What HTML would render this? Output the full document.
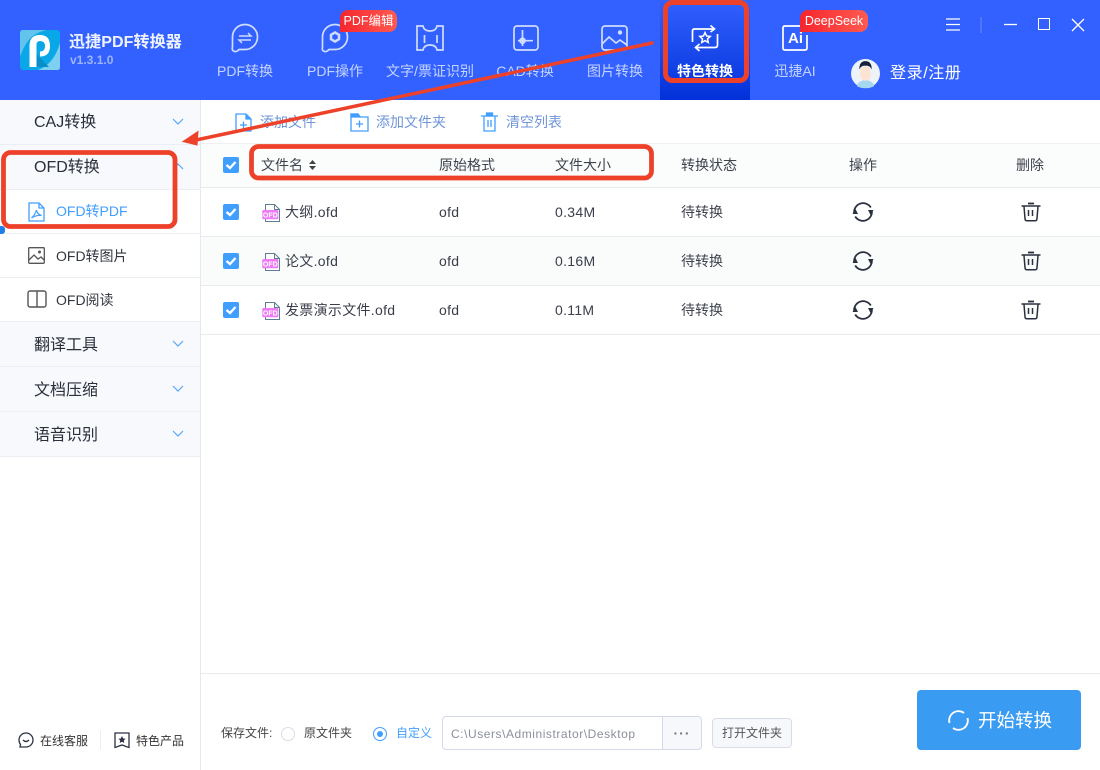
<!DOCTYPE html>
<html><head><meta charset="utf-8">
<style>
*{box-sizing:border-box}
html,body{margin:0;padding:0;width:1100px;height:770px;overflow:hidden;background:#fff;font-family:"Liberation Sans","Noto Sans CJK SC",sans-serif;color:#333}
.a{position:absolute;white-space:nowrap}
svg{position:absolute;overflow:visible}
.nav{color:#c4d4ff;font-size:14px;line-height:20px;top:61px;text-align:center;transform:translateX(-50%)}
.side{left:34px;font-size:16px;line-height:24px;color:#2b2f3a}
.sub{left:56px;font-size:14px;line-height:20px;color:#33363f}
.row{left:201px;width:899px;border-bottom:1px solid #e9ebf0}
.t{font-size:14px;line-height:20px;color:#3a3e4a;letter-spacing:.3px}
.h{font-size:14px;line-height:20px;color:#3f434e;top:155px}
.cb{position:absolute;left:223px;width:16px;height:16px;background:#409eff;border-radius:2px}
.sec{left:0;width:200px;background:#f7f9fd;border-bottom:1px solid #eceef3}
.subrow{left:0;width:200px;height:44px;background:#fff;border-bottom:1px solid #eceef3}
.tb{font-size:14px;line-height:20px;color:#6f95d8;top:112px}
</style></head><body>

<!-- header -->
<div class="a" style="left:0;top:0;width:1100px;height:100px;background:#3361ff"></div>
<div class="a" style="left:660px;top:0;width:90px;height:100px;background:linear-gradient(#3361ff,#0231d9)"></div>

<!-- logo -->
<svg style="left:20px;top:30px" width="40" height="40" viewBox="0 0 40 40">
<rect width="40" height="40" rx="3" fill="#0aa7e8"/>
<path d="M0 3Q0 0 3 0H27Q9 3 2 22L0 26Z" fill="#62c3ec"/>
<path d="M40 13V37Q40 40 37 40H18Q34 34 40 13Z" fill="#7dd0f2"/>
<path d="M16.500 24L29 37H16.500Z" fill="#0a8ec8"/>
<path d="M9.500 37V15Q10 5 20 5Q30 5 30 16Q30 26.500 20 26.500V21.500Q25 21.500 25 16Q25 11 20 11Q16.500 11 16.500 15V37Z" fill="#fff"/>
</svg>
<div class="a" style="left:69px;top:32px;font-size:16px;line-height:22px;color:#eef3ff;font-weight:bold;letter-spacing:.1px">迅捷PDF转换器</div>
<div class="a" style="left:70px;top:52px;font-size:12px;line-height:16px;color:#9db5f7;font-weight:bold">v1.3.1.0</div>

<!-- nav icons -->
<svg style="left:231px;top:24px" width="28" height="28" viewBox="0 0 28 28" fill="none" stroke="#cfdcff" stroke-width="1.700">
<path d="M1.500 13A12.500 12.500 0 1 1 14 25.500H8Q6 28 3.500 27.500Q.5 26.500 1.500 23Z"/>
<path d="M8 12H20L17 9M20 16H8L11 19" stroke-width="1.500"/></svg>
<div class="a nav" style="left:245px">PDF转换</div>

<svg style="left:321px;top:24px" width="28" height="28" viewBox="0 0 28 28" fill="none" stroke="#cfdcff" stroke-width="1.700">
<path d="M1.500 13A12.500 12.500 0 1 1 14 25.500H8Q6 28 3.500 27.500Q.5 26.500 1.500 23Z"/>
<path d="M14 8.500L18 10.800V15.200L14 17.500L10 15.200V10.800Z" stroke-width="2.500"/></svg>
<div class="a nav" style="left:335px">PDF操作</div>

<svg style="left:416px;top:25px" width="28" height="26" viewBox="0 0 28 26" fill="none" stroke="#cfdcff" stroke-width="1.700">
<path d="M1 1H7Q8 6 14 6Q20 6 21 1H27V25H21Q20 20 14 20Q8 20 7 25H1Z"/>
<path d="M8.500 10V18M21 10V18"/></svg>
<div class="a nav" style="left:430px">文字/票证识别</div>

<svg style="left:513px;top:25px" width="26" height="26" viewBox="0 0 26 26" fill="none" stroke="#cfdcff" stroke-width="1.700">
<rect x="1" y="1" width="24" height="24" rx="3"/>
<path d="M9.500 5V21M5 15.700H20"/><circle cx="9.500" cy="15.700" r="2.500" fill="#cfdcff"/></svg>
<div class="a nav" style="left:525px">CAD转换</div>

<svg style="left:601px;top:25px" width="28" height="26" viewBox="0 0 28 26" fill="none" stroke="#cfdcff" stroke-width="1.700">
<rect x="1" y="1" width="25" height="24" rx="3"/>
<path d="M1 19L8 12L15 18L19 15L26 20"/><circle cx="19" cy="7.500" r="2.200" fill="#cfdcff" stroke="none"/></svg>
<div class="a nav" style="left:615px">图片转换</div>

<svg style="left:691px;top:24px" width="28" height="28" viewBox="0 0 28 28" fill="none" stroke="#fff" stroke-width="1.700">
<path d="M1.500 18V7Q1.500 5 3.500 5H23M19.500 1.500L23.500 5L19.500 8"/>
<path d="M26.500 10V21Q26.500 23.500 24 23.500H5M8.500 20L4.500 23.500L8.500 27"/>
<path d="M14 8.500L15.600 12L19.200 12.400L16.500 14.900L17.300 18.500L14 16.600L10.700 18.500L11.500 14.900L8.800 12.400L12.400 12Z" stroke-width="1.500"/></svg>
<div class="a nav" style="left:705px;color:#fff;font-weight:bold">特色转换</div>

<svg style="left:782px;top:25px" width="26" height="26" viewBox="0 0 26 26" fill="none" stroke="#fff" stroke-width="1.700">
<path d="M18 1H3Q1 1 1 3V23Q1 25 3 25H23Q25 25 25 23V10"/></svg>
<div class="a" style="left:788px;top:30px;font-size:15px;line-height:18px;color:#fff;font-weight:bold">Ai</div>
<div class="a nav" style="left:795px">迅捷AI</div>

<!-- badges -->
<div class="a" style="left:340px;top:10px;width:57px;height:22px;border-radius:8px 8px 8px 0;background:linear-gradient(90deg,#f5262e,#ff5a50);color:#fff;font-size:12.500px;line-height:22px;text-align:center">PDF编辑</div>
<div class="a" style="left:800px;top:10px;width:68px;height:22px;border-radius:8px 8px 8px 0;background:linear-gradient(90deg,#f5262e,#ff5a50);color:#fff;font-size:12.500px;line-height:22px;text-align:center">DeepSeek</div>

<!-- avatar and login -->
<svg style="left:851px;top:59px" width="29" height="29" viewBox="0 0 28 28">
<circle cx="14" cy="14" r="14" fill="#eef3f9"/>
<path d="M6 26.500Q5 22 14 20Q23 22 22 26.500Q14 30 6 26.500Z" fill="#a5d8ee"/>
<rect x="9" y="7" width="10" height="14" rx="5" fill="#fde3d3"/>
<path d="M8 10Q8 2 14 2Q20 2 20 10Q18 6 14 6.500Q10 6 8 10Z" fill="#152238"/>
</svg>
<div class="a" style="left:890px;top:63px;font-size:16px;line-height:22px;color:#fff;letter-spacing:.6px">登录/注册</div>

<!-- window controls -->
<svg style="left:940px;top:10px" width="150" height="30" viewBox="0 0 150 30" fill="none" stroke="#fff" stroke-width="1.300">
<path d="M6 9H20M6 14.500H20M6 20H20"/><path d="M41 7V23" stroke="#5f82fa"/>
<path d="M64 14.500H77"/>
<path d="M132 9L144 21M144 9L132 21"/></svg>
<div class="a" style="left:1038px;top:18px;width:12px;height:12px;border:1.300px solid #fff"></div>

<!-- sidebar -->
<div class="a" style="left:200px;top:100px;width:1px;height:670px;background:#e6e8ee"></div>
<div class="a sec" style="top:100px;height:45px"></div>
<div class="a sec" style="top:145px;height:45px"></div>
<div class="a subrow" style="top:190px"></div>
<div class="a subrow" style="top:234px"></div>
<div class="a subrow" style="top:278px"></div>
<div class="a sec" style="top:322px;height:45px"></div>
<div class="a sec" style="top:367px;height:45px"></div>
<div class="a sec" style="top:412px;height:45px"></div>

<div class="a side" style="top:111px">CAJ转换</div>
<div class="a side" style="top:156px">OFD转换</div>
<div class="a side" style="top:334px">翻译工具</div>
<div class="a side" style="top:379px">文档压缩</div>
<div class="a side" style="top:424px">语音识别</div>

<svg style="left:172px;top:118px" width="12" height="7" fill="none" stroke="#53a8f5" stroke-width="1.200"><path d="M1 1L6 6L11 1"/></svg>
<svg style="left:172px;top:163px" width="12" height="7" fill="none" stroke="#53a8f5" stroke-width="1.200"><path d="M1 6L6 1L11 6"/></svg>
<svg style="left:172px;top:340px" width="12" height="7" fill="none" stroke="#53a8f5" stroke-width="1.200"><path d="M1 1L6 6L11 1"/></svg>
<svg style="left:172px;top:385px" width="12" height="7" fill="none" stroke="#53a8f5" stroke-width="1.200"><path d="M1 1L6 6L11 1"/></svg>
<svg style="left:172px;top:430px" width="12" height="7" fill="none" stroke="#53a8f5" stroke-width="1.200"><path d="M1 1L6 6L11 1"/></svg>

<div class="a sub" style="top:201px;color:#409eff">OFD转PDF</div>
<div class="a sub" style="top:246px">OFD转图片</div>
<div class="a sub" style="top:290px">OFD阅读</div>

<svg style="left:28px;top:202px" width="17" height="20" viewBox="0 0 17 20" fill="none" stroke="#409eff" stroke-width="1.300">
<path d="M1 1H11L16 6V19H1Z"/><path d="M11 1V6H16"/>
<path d="M3.500 16Q7 13 8.500 8Q9 12 13.500 13.500Q8 13 3.500 16Z" stroke-width="1.200"/></svg>
<svg style="left:28px;top:247px" width="17" height="17" viewBox="0 0 17 17" fill="none" stroke="#555" stroke-width="1.300">
<rect x=".7" y=".7" width="15.600" height="15.600" rx="1"/><path d="M1 13L6 8L10 12L13 10L16 13"/><circle cx="11.500" cy="5" r="1.500" fill="#555" stroke="none"/></svg>
<svg style="left:27px;top:290px" width="20" height="18" viewBox="0 0 20 18" fill="none" stroke="#555" stroke-width="1.400">
<rect x="1" y="1" width="18" height="16" rx="2"/><path d="M10 1V17"/></svg>
<div class="a" style="left:0;top:226px;width:5px;height:8px;background:#1f7fe6;border-radius:0 3px 3px 0"></div>

<!-- sidebar footer -->
<svg style="left:18px;top:732px" width="16" height="16" viewBox="0 0 16 16" fill="none" stroke="#2b3245" stroke-width="1.300">
<path d="M1 8A7 7 0 1 1 8 15H2L2.500 12.500Q1 10.500 1 8Z"/><path d="M5 8Q8 11 11 8"/></svg>
<div class="a" style="left:40px;top:732px;font-size:12px;line-height:18px;color:#333">在线客服</div>
<div class="a" style="left:100px;top:730px;width:1px;height:20px;background:#eceef3"></div>
<svg style="left:114px;top:732px" width="16" height="16" viewBox="0 0 16 16" fill="none" stroke="#2b3245" stroke-width="1.300">
<path d="M1 1H15V15.500L8 13L1 15.500Z"/><path d="M8 4L9.200 6.500L11.500 6.800L9.800 8.500L10.200 11L8 9.800L5.800 11L6.200 8.500L4.500 6.800L6.800 6.500Z" fill="#2b3245" stroke="none"/></svg>
<div class="a" style="left:136px;top:732px;font-size:12px;line-height:18px;color:#333">特色产品</div>

<!-- toolbar -->
<svg style="left:235px;top:113px" width="17" height="19" viewBox="0 0 17 19" fill="none" stroke="#409eff" stroke-width="1.300">
<path d="M1 1H11L16 6V18H1Z"/><path d="M11 1V6H16" fill="#409eff"/><path d="M5 12H12M8.500 8.500V15.500"/></svg>
<div class="a tb" style="left:260px">添加文件</div>
<svg style="left:350px;top:113px" width="19" height="19" viewBox="0 0 19 19" fill="none" stroke="#409eff" stroke-width="1.300">
<path d="M1 1H8L10 4H18V18H1Z"/><path d="M1 1H8L10 4H1Z" fill="#409eff"/><path d="M6 11H13M9.500 7.500V14.500"/></svg>
<div class="a tb" style="left:376px">添加文件夹</div>
<svg style="left:481px;top:112px" width="17" height="20" viewBox="0 0 17 20" fill="none" stroke="#409eff" stroke-width="1.300">
<path d="M0 4H17"/><rect x="5.500" y="1" width="6" height="3" fill="#409eff"/><path d="M3 4V19H14V4M7 8V15M10 8V15"/></svg>
<div class="a tb" style="left:506px">清空列表</div>

<!-- table header -->
<div class="a row" style="top:143px;height:45px;background:#fbfcfc;border-top:1px solid #eef0f3"></div>
<div class="cb" style="top:157px"></div>
<svg style="left:223px;top:157px" width="16" height="16" fill="none" stroke="#fff" stroke-width="2.400"><path d="M3.500 8L7 11L12.500 5"/></svg>
<div class="a h" style="left:261px">文件名</div>
<svg style="left:309px;top:160px" width="7" height="10"><path d="M3.500 0L7 4H0ZM3.500 10L7 6H0Z" fill="#444"/></svg>
<div class="a h" style="left:439px">原始格式</div>
<div class="a h" style="left:555px">文件大小</div>
<div class="a h" style="left:681px">转换状态</div>
<div class="a h" style="left:849px">操作</div>
<div class="a h" style="left:1016px">删除</div>

<!-- rows -->
<div class="a row" style="top:188px;height:49px"></div>
<div class="a row" style="top:237px;height:49px;background:#fafbfb"></div>
<div class="a row" style="top:286px;height:49px"></div>

<!-- row 1 -->
<div class="cb" style="top:204px"></div>
<svg style="left:223px;top:204px" width="16" height="16" fill="none" stroke="#fff" stroke-width="2.400"><path d="M3.500 8L7 11L12.500 5"/></svg>
<svg style="left:262px;top:204px" width="18" height="18" viewBox="0 0 18 18" fill="none"><path d="M3.500 .5H12.500L17.500 5.500V17.500H3.500Z" fill="#fff" stroke="#5f7d90"/><path d="M12.500 .5V5.500H17.500" stroke="#5f7d90"/><rect x="0.300" y="6" width="16" height="9.300" rx="1" fill="#ee7bf5"/><text x="8.300" y="13.300" font-size="7" font-weight="bold" fill="#fff" text-anchor="middle" font-family="Liberation Sans">OFD</text></svg>
<div class="a t" style="left:285px;top:202px">大纲.ofd</div>
<div class="a t" style="left:439px;top:202px">ofd</div>
<div class="a t" style="left:555px;top:202px">0.34M</div>
<div class="a h" style="left:681px;top:202px">待转换</div>
<svg style="left:853px;top:202px" width="20" height="20" viewBox="0 0 20 20" fill="none" stroke="#2b3040" stroke-width="1.800">
<path d="M1.200 11.500A9 9 0 0 1 17.800 5.500M18.800 8.500A9 9 0 0 1 2.200 14.500"/><path d="M15 8H20.500L17.500 13Z" fill="#2b3040" stroke="none"/><path d="M-.5 12H5L2.500 7Z" fill="#2b3040" stroke="none"/></svg>
<svg style="left:1021px;top:202px" width="20" height="20" viewBox="0 0 20 20" fill="none" stroke="#2b3040" stroke-width="1.500">
<path d="M0.500 4H19.500"/><path d="M7 1.500H13" stroke-width="1.800"/><path d="M3 4.500L4 16.500Q4 18.800 6 18.800H14Q16 18.800 16 16.500L17 4.500"/><path d="M7.500 8V14M11.500 8V14"/></svg>

<!-- row 2 -->
<div class="cb" style="top:253px"></div>
<svg style="left:223px;top:253px" width="16" height="16" fill="none" stroke="#fff" stroke-width="2.400"><path d="M3.500 8L7 11L12.500 5"/></svg>
<svg style="left:262px;top:253px" width="18" height="18" viewBox="0 0 18 18" fill="none"><path d="M3.500 .5H12.500L17.500 5.500V17.500H3.500Z" fill="#fff" stroke="#5f7d90"/><path d="M12.500 .5V5.500H17.500" stroke="#5f7d90"/><rect x="0.300" y="6" width="16" height="9.300" rx="1" fill="#ee7bf5"/><text x="8.300" y="13.300" font-size="7" font-weight="bold" fill="#fff" text-anchor="middle" font-family="Liberation Sans">OFD</text></svg>
<div class="a t" style="left:285px;top:251px">论文.ofd</div>
<div class="a t" style="left:439px;top:251px">ofd</div>
<div class="a t" style="left:555px;top:251px">0.16M</div>
<div class="a h" style="left:681px;top:251px">待转换</div>
<svg style="left:853px;top:251px" width="20" height="20" viewBox="0 0 20 20" fill="none" stroke="#2b3040" stroke-width="1.800">
<path d="M1.200 11.500A9 9 0 0 1 17.800 5.500M18.800 8.500A9 9 0 0 1 2.200 14.500"/><path d="M15 8H20.500L17.500 13Z" fill="#2b3040" stroke="none"/><path d="M-.5 12H5L2.500 7Z" fill="#2b3040" stroke="none"/></svg>
<svg style="left:1021px;top:251px" width="20" height="20" viewBox="0 0 20 20" fill="none" stroke="#2b3040" stroke-width="1.500">
<path d="M0.500 4H19.500"/><path d="M7 1.500H13" stroke-width="1.800"/><path d="M3 4.500L4 16.500Q4 18.800 6 18.800H14Q16 18.800 16 16.500L17 4.500"/><path d="M7.500 8V14M11.500 8V14"/></svg>

<!-- row 3 -->
<div class="cb" style="top:302px"></div>
<svg style="left:223px;top:302px" width="16" height="16" fill="none" stroke="#fff" stroke-width="2.400"><path d="M3.500 8L7 11L12.500 5"/></svg>
<svg style="left:262px;top:302px" width="18" height="18" viewBox="0 0 18 18" fill="none"><path d="M3.500 .5H12.500L17.500 5.500V17.500H3.500Z" fill="#fff" stroke="#5f7d90"/><path d="M12.500 .5V5.500H17.500" stroke="#5f7d90"/><rect x="0.300" y="6" width="16" height="9.300" rx="1" fill="#ee7bf5"/><text x="8.300" y="13.300" font-size="7" font-weight="bold" fill="#fff" text-anchor="middle" font-family="Liberation Sans">OFD</text></svg>
<div class="a t" style="left:285px;top:300px">发票演示文件.ofd</div>
<div class="a t" style="left:439px;top:300px">ofd</div>
<div class="a t" style="left:555px;top:300px">0.11M</div>
<div class="a h" style="left:681px;top:300px">待转换</div>
<svg style="left:853px;top:300px" width="20" height="20" viewBox="0 0 20 20" fill="none" stroke="#2b3040" stroke-width="1.800">
<path d="M1.200 11.500A9 9 0 0 1 17.800 5.500M18.800 8.500A9 9 0 0 1 2.200 14.500"/><path d="M15 8H20.500L17.500 13Z" fill="#2b3040" stroke="none"/><path d="M-.5 12H5L2.500 7Z" fill="#2b3040" stroke="none"/></svg>
<svg style="left:1021px;top:300px" width="20" height="20" viewBox="0 0 20 20" fill="none" stroke="#2b3040" stroke-width="1.500">
<path d="M0.500 4H19.500"/><path d="M7 1.500H13" stroke-width="1.800"/><path d="M3 4.500L4 16.500Q4 18.800 6 18.800H14Q16 18.800 16 16.500L17 4.500"/><path d="M7.500 8V14M11.500 8V14"/></svg>

<!-- footer -->
<div class="a" style="left:201px;top:673px;width:899px;height:1px;background:#e9ebf0"></div>
<div class="a" style="left:221px;top:724px;font-size:12px;line-height:18px;color:#444">保存文件:</div>
<div class="a" style="left:281px;top:727px;width:14px;height:14px;border:1px solid #d8dce6;border-radius:50%"></div>
<div class="a" style="left:304px;top:724px;font-size:12px;line-height:18px;color:#444">原文件夹</div>
<div class="a" style="left:373px;top:727px;width:14px;height:14px;border:1px solid #409eff;border-radius:50%"></div>
<div class="a" style="left:377px;top:731px;width:6px;height:6px;background:#409eff;border-radius:50%"></div>
<div class="a" style="left:396px;top:724px;font-size:12px;line-height:18px;color:#409eff">自定义</div>

<div class="a" style="left:442px;top:716px;width:260px;height:34px;border:1px solid #d3d9e6;border-radius:4px;background:#fff"></div>
<div class="a" style="left:662px;top:717px;width:39px;height:32px;border-left:1px solid #d3d9e6;background:#f6f8fb;border-radius:0 3px 3px 0;color:#777;font-size:14px;line-height:32px;text-align:center;font-weight:bold;letter-spacing:1px">···</div>
<div class="a" style="left:451px;top:725px;font-size:12px;line-height:18px;color:#8a8f9c;letter-spacing:.55px">C:\Users\Administrator\Desktop</div>
<div class="a" style="left:712px;top:718px;width:80px;height:30px;border:1px solid #d8dde8;border-radius:4px;background:#f6f8fb;font-size:12px;line-height:28px;text-align:center;color:#555">打开文件夹</div>

<div class="a" style="left:917px;top:690px;width:164px;height:60px;background:#3a9bf2;border-radius:4px"></div>
<svg style="left:948px;top:710px" width="21" height="21" viewBox="0 0 21 21" fill="none" stroke="#fff" stroke-width="1.800">
<path d="M1.500 13A9.300 9.300 0 0 1 16 3M19.500 8A9.300 9.300 0 0 1 5 18"/></svg>
<div class="a" style="left:978px;top:708px;font-size:18.500px;line-height:26px;color:#fff">开始转换</div>

<!-- annotations -->
<svg style="left:0;top:0;z-index:10" width="1100" height="770" viewBox="0 0 1100 770" fill="none">
<path d="M652 43L196 140" stroke="#ee412a" stroke-width="3.500" stroke-linecap="round"/>
<path d="M183 141.500L198 131.500L197 145Z" fill="#ee412a" stroke="#ee412a" stroke-width="1"/>
<rect x="665.500" y="2.500" width="81" height="78" rx="7" stroke="#ee412a" stroke-width="5"/>
<rect x="3.500" y="152.500" width="171.500" height="74" rx="7" stroke="#ee412a" stroke-width="4.800"/>
<rect x="251.500" y="146.500" width="400" height="31.500" rx="7" stroke="#ee412a" stroke-width="4.800"/>
</svg>
</body></html>
